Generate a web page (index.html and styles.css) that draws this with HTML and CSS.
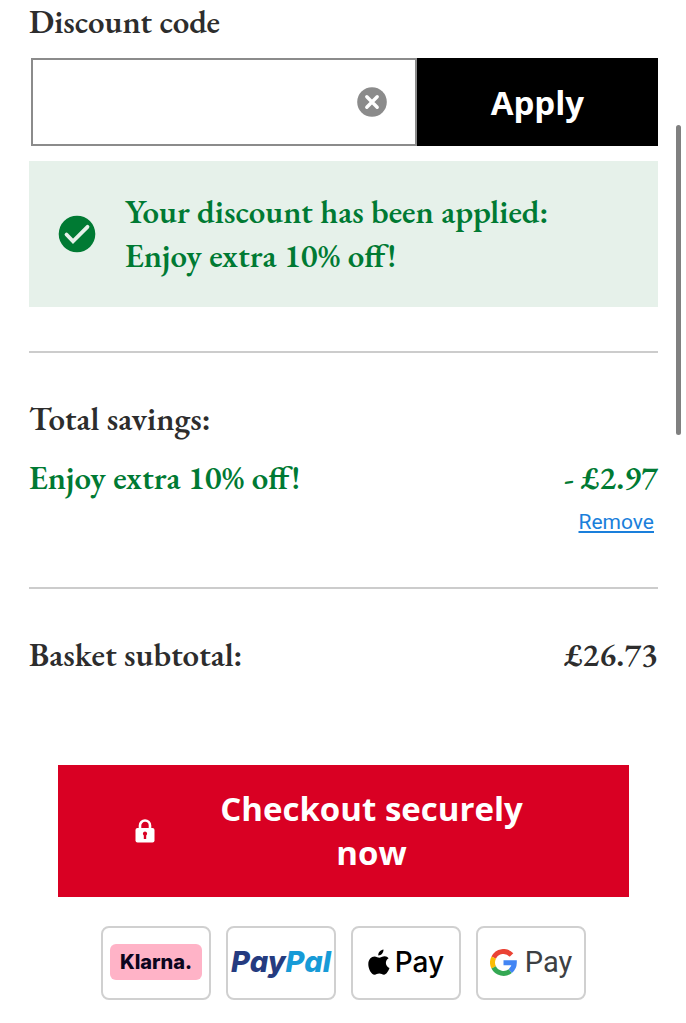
FILE: index.html
```html
<!DOCTYPE html>
<html lang="en">
<head>
    <meta charset="UTF-8">
    <meta name="viewport" content="width=device-width, initial-scale=1.0">
    <title>Basket</title>
    <link rel="stylesheet" href="styles.css">
</head>
<body>

    <main class="basket">
        <form class="discount">
            <label class="discount-label" for="discount-code">Discount code</label>
            <div class="discount-row">
                <div class="discount-field">
                    <input type="text" id="discount-code" class="discount-input">
                    <button type="button" class="clear-btn" aria-label="Clear discount code">
                        <svg width="30" height="30" viewBox="0 0 30 30" aria-hidden="true">
                            <circle cx="15" cy="15" r="14.800" fill="#8b8b8b"/>
                            <path d="M9.800 9.800l10.400 10.400M20.200 9.800l-10.400 10.400" stroke="#fff" stroke-width="3.400" stroke-linecap="round"/>
                        </svg>
                    </button>
                </div>
                <button type="submit" class="apply-btn">Apply</button>
            </div>
        </form>

        <div class="notice">
            <svg class="notice-icon" width="38" height="38" viewBox="0 0 38 38" aria-hidden="true">
                <circle cx="19" cy="19" r="18.300" fill="#007a33"/>
                <path d="M8.500 19.500l6.500 6.800L29.500 11.800" fill="none" stroke="#e6f1ea" stroke-width="3.800" stroke-linecap="round"/>
            </svg>
            <p>Your discount has been applied:<br>Enjoy extra 10% off!</p>
        </div>

        <section class="savings">
            <h2>Total savings:</h2>
            <div class="row saving">
                <span>Enjoy extra 10% off!</span>
                <span>- £2.97</span>
            </div>
            <a class="remove" href="#">Remove</a>
        </section>

        <section class="row subtotal">
            <h2>Basket subtotal:</h2>
            <span>£26.73</span>
        </section>

        <button type="button" class="checkout-btn">
            <svg width="20" height="24" viewBox="0 0 20 24" aria-hidden="true">
                <path d="M5 10V6.500a5 5 0 0 1 10 0V10" fill="none" stroke="#fff" stroke-width="2.600"/>
                <rect x="0.500" y="9" width="19" height="14.500" rx="2" fill="#fff"/>
                <path d="M10 12.500a2.200 2.200 0 0 1 1.200 4v3.500H8.800v-3.500a2.200 2.200 0 0 1 1.200-4z" fill="#d90023"/>
            </svg>
            <span class="checkout-text">Checkout securely now</span>
        </button>

        <ul class="payments">
            <li><span class="klarna">Klarna.</span></li>
            <li><span class="paypal">Pay<span class="pal">Pal</span></span></li>
            <li>
                <svg width="22" height="27" viewBox="0 0 22 27" aria-hidden="true">
                    <path d="M15.500 0.500c.2 3.300-2.400 6-5.200 5.900C10 3.500 12.600.800 15.500.500zM20.600 9.300c-4 2.300-3.400 8 .9 9.800-1.200 3.300-3.300 6.600-5.500 6.600-1.900 0-2.500-1.200-4.700-1.200s-3 1.200-4.700 1.200C3.200 25.700.300 20 .300 15.300c0-4.800 3-7.800 6.200-7.800 2 0 3.500 1.300 4.800 1.300 1.200 0 3.100-1.500 5.500-1.500 1.500 0 2.900.7 3.800 2z" fill="#000"/>
                </svg>
                <span class="apple-pay">Pay</span>
            </li>
            <li class="google">
                <svg width="27" height="27" viewBox="0 0 27 27" fill="none" stroke-width="5" aria-hidden="true">
                    <path d="M21.500 5.900A11 11 0 0 0 3.700 8.600" stroke="#ea4335"/>
                    <path d="M3.700 8.600a11 11 0 0 0 0 9.800" stroke="#fbbc04"/>
                    <path d="M3.700 18.400a11 11 0 0 0 16.600 3.700" stroke="#34a853"/>
                    <path d="M13.500 13.700H24.300a11 11 0 0 1-4 8.400" stroke="#4285f4"/>
                </svg>
                <span class="google-pay">Pay</span>
            </li>
        </ul>
    </main>

    <div class="scroll-thumb"></div>

</body>
</html>
```
FILE: styles.css
```css
* { margin: 0; padding: 0; box-sizing: border-box; }
body {
    background: #fff;
    color: #2d2d2d;
    font-family: "EB Garamond", "Liberation Serif", serif;
    font-size: 33px;
    font-weight: 600;
    line-height: 44px;
}
h2 { font-size: 33px; font-weight: 600; }
button { border: none; cursor: pointer; }
svg { display: block; flex: none; }

.basket { padding: 0 28px 24px 29px; }

.discount-label { display: block; }
.discount-row {
    display: flex;
    height: 88px;
    margin: 14px 0 15px 2px;
}
.discount-field { position: relative; flex: 8; }
.discount-input {
    width: 100%;
    height: 100%;
    padding: 0 64px 0 16px;
    border: 2px solid #8b8b8b;
    border-radius: 0;
    font-size: 33px;
    outline: none;
}
.clear-btn {
    position: absolute;
    top: 29px;
    right: 30px;
    background: none;
}
.apply-btn {
    flex: 5;
    background: #000;
    color: #fff;
    font: bold 33px "Open Sans", sans-serif;
}

.notice {
    display: flex;
    align-items: center;
    gap: 29px;
    padding: 29px;
    background: #e6f1ea;
    color: #007a33;
}

.row { display: flex; justify-content: space-between; }
.savings {
    margin-top: 44px;
    padding: 44px 0 50px;
    border-top: 2px solid #ccc;
    border-bottom: 2px solid #ccc;
}
.saving { margin-top: 15px; color: #007a33; }
.remove {
    display: block;
    width: fit-content;
    margin: 7px 4px 0 auto;
    color: #1a7fdb;
    font: 21px/30px Roboto, sans-serif;
}
.subtotal { padding: 44px 0 88px; }

.checkout-btn {
    display: flex;
    align-items: center;
    gap: 36px;
    width: calc(100% - 58px);
    margin: 0 29px;
    padding: 22px 77px;
    background: #d90023;
    color: #fff;
    font: bold 33px/44px "Open Sans", sans-serif;
}
.checkout-text { flex: 1; }

.payments {
    display: flex;
    justify-content: center;
    gap: 15px;
    margin-top: 29px;
    list-style: none;
}
.payments li {
    display: flex;
    align-items: center;
    justify-content: center;
    gap: 5px;
    width: 110px;
    height: 74px;
    padding-bottom: 2px;
    border: 2px solid #d0d0d0;
    border-radius: 8px;
}
.payments .google { gap: 8px; }
.klarna {
    padding: 0 10px;
    border-radius: 6px;
    background: #ffb3c7;
    color: #0b051d;
    font: 800 20px/36px Inter, sans-serif;
}
.paypal {
    color: #253b80;
    font: italic 800 29px/36px Inter, sans-serif;
}
.pal { color: #179bd7; }
.apple-pay {
    color: #000;
    font: 500 28px/36px Inter, sans-serif;
}
.google-pay {
    color: #3c4043;
    font: 400 29px/36px Roboto, sans-serif;
}

/* scroll indicator over the page edge */
.scroll-thumb {
    position: fixed;
    top: 125px;
    right: 5px;
    width: 5px;
    height: 310px;
    border-radius: 3px;
    background: #808080;
}
```
